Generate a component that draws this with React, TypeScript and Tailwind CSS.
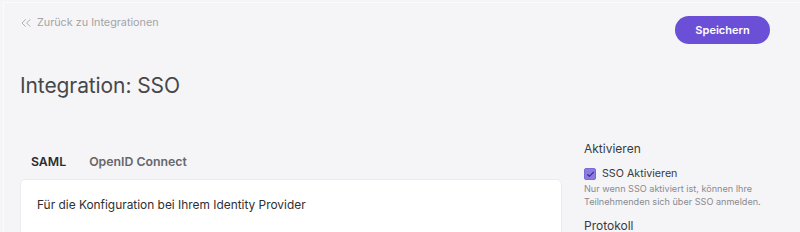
import { Check, ChevronsLeft } from 'lucide-react';

export default function App() {
  return (
    <div
      className="h-screen bg-[#f5f5f7] pl-[3px] pt-[2px] overflow-hidden"
      style={{ fontFamily: 'Inter, "Noto Sans", sans-serif' }}
    >
      <div className="min-h-[230px] border-l border-t border-[#fbfbfc] pl-[16px] pr-[30px]">
        <header className="flex items-start justify-between pt-[13px]">
          <a className="-mt-[1px] flex items-center gap-[3px] text-[10.8px] leading-[14px] text-[#a3a3a8]">
            <ChevronsLeft className="-ml-[2px] w-[16px] h-[16px]" strokeWidth={1.3} />
            Zurück zu Integrationen
          </a>
          <button className="h-[28px] w-[95px] rounded-full bg-[#6b4fd6] text-white text-[11px] font-semibold">
            Speichern
          </button>
        </header>

        <h1 className="mt-[27px] text-[21px] leading-[30px] text-[#474749] tracking-[-0.1px]">
          Integration: SSO
        </h1>

        <div className="mt-[39px] flex gap-[22px]">
          <div className="w-[542px] shrink-0 pt-[13px]">
            <div className="flex gap-[23px] pl-[11px] text-[12.3px] leading-[18px] font-semibold">
              <span className="text-[#2b2b2e]">SAML</span>
              <span className="text-[#66666b]">OpenID Connect</span>
            </div>
            <div className="mt-[8px] h-[80px] rounded-[5px] border border-[#ececef] bg-white px-[16px] pt-[16px]">
              <p className="text-[11.9px] leading-[18px] text-[#2f2f33]">
                Für die Konfiguration bei Ihrem Identity Provider
              </p>
            </div>
          </div>

          <aside className="flex-1">
            <h3 className="text-[12px] leading-[18px] text-[#3a3a3e]">Aktivieren</h3>
            <label className="mt-[9px] flex items-center gap-[6px] text-[10.7px] leading-[14px] text-[#3a3a3e]">
              <span className="flex h-[12px] w-[12px] items-center justify-center rounded-[2px] bg-[#8c7be0] border border-[#7c6ad6]">
                <Check className="h-[9px] w-[9px] text-[#3d2b9e]" strokeWidth={3} />
              </span>
              SSO Aktivieren
            </label>
            <p className="mt-[1px] text-[9.1px] leading-[13px] text-[#8a8a90]">
              Nur wenn SSO aktiviert ist, können Ihre Teilnehmenden sich über SSO anmelden.
            </p>
            <h3 className="mt-[9px] text-[12px] leading-[18px] text-[#3a3a3e]">Protokoll</h3>
          </aside>
        </div>
      </div>
    </div>
  );
}
